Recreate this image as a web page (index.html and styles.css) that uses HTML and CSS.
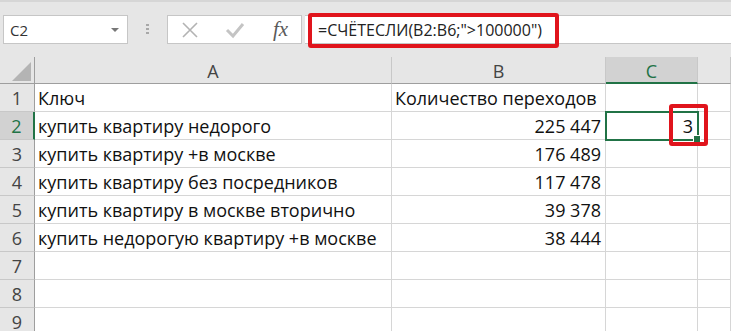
FILE: index.html
```
<!DOCTYPE html>
<html lang="ru">

<head>
  <meta charset="UTF-8" />
  <meta name="viewport" content="width=device-width, initial-scale=1.0" />
  <title>СЧЁТЕСЛИ</title>
  <link rel="stylesheet" href="styles.css">
</head>

<body>
  <div class="toolbar">
    <div class="namebox">
      <span>C2</span>
      <span class="caret"></span>
    </div>
    <div class="grip"></div>
    <div class="fxbox">
      <svg class="ico" width="18" height="18" viewBox="0 0 18 18">
        <path d="M2 2 L16 16 M16 2 L2 16" stroke="#b3b3b3" stroke-width="1.6" fill="none" />
      </svg>
      <svg class="ico" width="20" height="18" viewBox="0 0 20 18">
        <path d="M2 9 L8 15 L18 3" stroke="#c4c4c4" stroke-width="3" fill="none" />
      </svg>
      <span class="fx">fx</span>
    </div>
    <div class="formula">
      <span class="formula-text">=СЧЁТЕСЛИ(B2:B6;"&gt;100000")</span>
      <span class="mark mark-formula"></span>
    </div>
  </div>

  <div class="sheet">
    <div class="c corner"><span class="tri"></span></div>
    <div class="c colhead">A</div>
    <div class="c colhead">B</div>
    <div class="c colhead active-col">C</div>
    <div class="c colhead"></div>

    <div class="c rowhead">1</div>
    <div class="c">Ключ</div>
    <div class="c">Количество переходов</div>
    <div class="c"></div>
    <div class="c"></div>

    <div class="c rowhead active-row">2</div>
    <div class="c">купить квартиру недорого</div>
    <div class="c num">225 447</div>
    <div class="c num selected">3<span class="handle"></span><span class="mark mark-cell"></span></div>
    <div class="c"></div>

    <div class="c rowhead">3</div>
    <div class="c">купить квартиру +в москве</div>
    <div class="c num">176 489</div>
    <div class="c"></div>
    <div class="c"></div>

    <div class="c rowhead">4</div>
    <div class="c">купить квартиру без посредников</div>
    <div class="c num">117 478</div>
    <div class="c"></div>
    <div class="c"></div>

    <div class="c rowhead">5</div>
    <div class="c">купить квартиру в москве вторично</div>
    <div class="c num">39 378</div>
    <div class="c"></div>
    <div class="c"></div>

    <div class="c rowhead">6</div>
    <div class="c">купить недорогую квартиру +в москве</div>
    <div class="c num">38 444</div>
    <div class="c"></div>
    <div class="c"></div>

    <div class="c rowhead">7</div>
    <div class="c"></div>
    <div class="c"></div>
    <div class="c"></div>
    <div class="c"></div>

    <div class="c rowhead">8</div>
    <div class="c"></div>
    <div class="c"></div>
    <div class="c"></div>
    <div class="c"></div>

    <div class="c rowhead">9</div>
    <div class="c"></div>
    <div class="c"></div>
    <div class="c"></div>
    <div class="c"></div>
  </div>
</body>

</html>
```

FILE: styles.css
```
body {
  margin: 0;
  padding: 0;
  font-family: 'Open Sans', sans-serif;
  background-color: #fff;
  color: #111;
  overflow: hidden;
}

/* formula bar */
.toolbar {
  height: 57px;
  box-sizing: border-box;
  background-color: #e6e6e6;
  border-top: 2px solid #d6d6d6;
  padding: 13px 0 0 3px;
  display: flex;
  align-items: flex-start;
}

.namebox {
  width: 125px;
  height: 29px;
  box-sizing: border-box;
  background-color: #fff;
  border: 1px solid #c6c6c6;
  display: flex;
  align-items: center;
  justify-content: space-between;
  padding: 0 8px 0 6px;
  font-size: 15px;
  color: #333;
}

.caret {
  width: 0;
  height: 0;
  border-left: 4px solid transparent;
  border-right: 4px solid transparent;
  border-top: 4px solid #777;
}

.grip {
  width: 39px;
  height: 29px;
  background: radial-gradient(circle, #a8a8a8 1.2px, transparent 1.5px) center 8px / 3px 4px repeat-y;
  background-size: 3px 4px;
  background-clip: content-box;
  padding: 8px 0;
  box-sizing: border-box;
}

.fxbox {
  width: 135px;
  height: 29px;
  box-sizing: border-box;
  background-color: #fff;
  border: 1px solid #c6c6c6;
  display: flex;
  align-items: center;
  padding-left: 13px;
  gap: 26px;
}

.fx {
  font-family: 'Liberation Serif', serif;
  font-style: italic;
  font-size: 21px;
  color: #5a5a5a;
  margin-left: 2px;
}

.formula {
  flex: 1;
  margin-left: 3px;
  height: 29px;
  box-sizing: border-box;
  background-color: #fff;
  border-top: 1px solid #c6c6c6;
  border-bottom: 1px solid #c6c6c6;
  padding-left: 13px;
  display: flex;
  align-items: center;
  font-size: 16px;
  color: #222;
  position: relative;
}

/* red highlight frames */
.mark {
  position: absolute;
  border: 4px solid #e0141c;
  border-radius: 3px;
  box-sizing: border-box;
}

.mark-formula {
  left: 3px;
  top: -3px;
  width: 251px;
  height: 35px;
}

.mark-cell {
  right: -11px;
  top: -8px;
  width: 39px;
  height: 42px;
}

/* grid */
.sheet {
  display: grid;
  grid-template-columns: 35px 357px 214px 92px 1fr;
  grid-template-rows: 27px;
  grid-auto-rows: 28px;
  font-size: 18px;
}

.c {
  box-sizing: border-box;
  border-right: 1px solid #d6d6d6;
  border-bottom: 1px solid #d6d6d6;
  padding: 1px 4px 0 3px;
  line-height: 26px;
  white-space: nowrap;
}

.num {
  text-align: right;
}

.corner,
.colhead,
.rowhead {
  background-color: #e6e6e6;
  color: #444;
  text-align: center;
  border-color: #bdbdbd;
  padding: 1px 0 0 0;
}

.colhead {
  border-right-color: #c8c8c8;
  border-bottom-color: #9e9e9e;
}

.rowhead {
  border-right-color: #9e9e9e;
  border-bottom-color: #c8c8c8;
}

.corner {
  position: relative;
  border-right-color: #9e9e9e;
  border-bottom-color: #9e9e9e;
}

.tri {
  position: absolute;
  right: 3px;
  bottom: 2px;
  width: 0;
  height: 0;
  border-left: 19px solid transparent;
  border-bottom: 19px solid #b4b4b4;
}

.active-col {
  background-color: #d2d2d2;
  color: #217346;
  border-bottom: 2px solid #217346;
}

.active-row {
  background-color: #d2d2d2;
  color: #217346;
  border-right: 2px solid #217346;
}

.selected {
  position: relative;
  outline: 2px solid #217346;
  outline-offset: -1px;
}

.handle {
  position: absolute;
  right: -4px;
  bottom: -4px;
  width: 6px;
  height: 6px;
  background-color: #217346;
  border: 1px solid #fff;
}
```
